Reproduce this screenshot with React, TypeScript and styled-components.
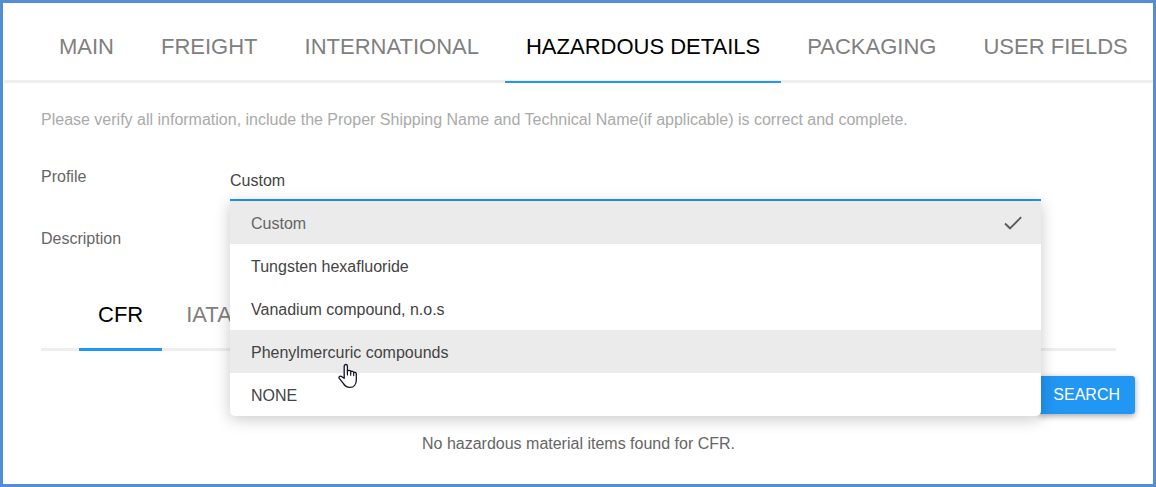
import React, { useState } from 'react';
import styled, { createGlobalStyle } from 'styled-components';

const GlobalStyle = createGlobalStyle`
  *, *::before, *::after { box-sizing: border-box; }
  body {
    margin: 0;
    background: #fff;
    font-family: "Liberation Sans", Arial, sans-serif;
    font-size: 16px;
    line-height: 20px;
    color: #666;
  }
  button, select { font: inherit; }
`;

const Page = styled.main`
  min-height: 100vh;
  border: 3px solid #548dd4;
  overflow: hidden;
`;

const TabBar = styled.nav<{ $nested?: boolean }>`
  display: flex;
  gap: 5px;
  height: 80px;
  margin-top: ${(p) => (p.$nested ? 22 : 0)}px;
  margin-left: ${(p) => (p.$nested ? 0 : 1)}px;
  padding-left: ${(p) => (p.$nested ? 38 : 34)}px;
  box-shadow: inset 0 -3px 0 #eee;
`;

const Tab = styled.button<{ $active?: boolean; $nested?: boolean }>`
  flex: none;
  padding: 10px ${(p) => (p.$nested ? 19 : 21)}px 0;
  border: 0;
  border-bottom: ${(p) => (p.$nested ? 3 : 2)}px solid ${(p) => (p.$active ? '#2196f3' : 'transparent')};
  background: none;
  color: ${(p) => (p.$active ? '#000' : '#808080')};
  font-size: 22px;
  line-height: 28px;
  white-space: nowrap;
  cursor: pointer;
`;

const Content = styled.section`
  padding: 27px 37px 0 38px;
`;

const Note = styled.p`
  margin: 0;
  color: #aaa;
`;

const Form = styled.form`
  display: grid;
  grid-template-columns: 189px 1fr;
  row-gap: 18px;
  margin-top: 27px;
  padding-right: 75px;
`;

const Label = styled.label`
  padding-top: 10px;
`;

const Field = styled.div`
  position: relative;
  height: 44px;
`;

const Select = styled.select`
  appearance: none;
  display: block;
  width: 100%;
  height: 44px;
  padding: 5px 0 0;
  border: 0;
  border-bottom: 2px solid #2196f3;
  border-radius: 0;
  outline: 0;
  background: transparent;
  color: #444;
`;

const Menu = styled.ul`
  position: absolute;
  z-index: 2;
  top: 100%;
  left: 0;
  right: 0;
  margin: 0;
  padding: 0;
  list-style: none;
  background: #fff;
  border-radius: 0 0 5px 5px;
  box-shadow: 0 3px 16px rgba(0, 0, 0, 0.22);
`;

const Option = styled.li<{ $shaded?: boolean; $selected?: boolean }>`
  position: relative;
  display: flex;
  align-items: center;
  justify-content: space-between;
  height: 43px;
  padding: 2px 18px 0 21px;
  background: ${(p) => (p.$shaded ? '#ebebeb' : 'transparent')};
  color: ${(p) => (p.$selected ? '#666' : '#444')};
  cursor: pointer;
`;

const Pointer = styled.svg`
  position: absolute;
  top: 33px;
  left: 108px;
  z-index: 3;
`;

const Description = styled.output`
  padding-top: 10px;
`;

const Actions = styled.div`
  display: flex;
  justify-content: flex-end;
  margin: 25px -19px 0 0;
`;

const SearchButton = styled.button`
  height: 38px;
  padding: 0 15px;
  border: 0;
  border-radius: 3px;
  background: #2196f3;
  color: #fff;
  box-shadow: 0 2px 6px rgba(0, 0, 0, 0.35);
  cursor: pointer;
`;

const Empty = styled.p`
  margin: 20px 0 0;
  text-align: center;
`;

const sections = ['MAIN', 'FREIGHT', 'INTERNATIONAL', 'HAZARDOUS DETAILS', 'PACKAGING', 'USER FIELDS'];
const regulations = ['CFR', 'IATA'];
const profiles = ['Custom', 'Tungsten hexafluoride', 'Vanadium compound, n.o.s', 'Phenylmercuric compounds', 'NONE'];

function CheckMark() {
  return (
    <svg width="20" height="16" viewBox="0 0 20 16" fill="none" aria-hidden="true">
      <path d="M2 7.5 L7 12.3 L18.2 1.2" stroke="#5c5c5c" strokeWidth="1.9" />
    </svg>
  );
}

function HandPointer() {
  return (
    <Pointer width="20" height="26" viewBox="0 0 20 26" aria-hidden="true">
      <path
        d="M6.2 15.3V3.2C6.2 .9 9.4 .9 9.4 3.2V8.2C10 7 12.5 7.2 12.8 8.7C13.6 7.9 15.5 8.1 15.7 9.6C16.5 8.8 18.3 9.2 18.3 11V17.2C18.3 21.5 15.8 24.4 12 24.4C8.8 24.4 6.9 23.2 5.3 20.4L1.3 15.4C.3 13.8 2.1 12.4 3.6 13.6Z"
        fill="#fff"
        stroke="#141428"
        strokeWidth="1.3"
        strokeLinejoin="round"
      />
      <path d="M9.4 7.8V12M12.7 8.6V12.2M15.7 9.6V12.6" stroke="#141428" strokeWidth="1.2" strokeLinecap="round" />
    </Pointer>
  );
}

export default function App() {
  const [section, setSection] = useState('HAZARDOUS DETAILS');
  const [regulation, setRegulation] = useState('CFR');
  const [profile, setProfile] = useState('Custom');
  const [hovered, setHovered] = useState('Phenylmercuric compounds');

  return (
    <>
      <GlobalStyle />
      <Page>
        <TabBar>
          {sections.map((name) => (
            <Tab key={name} type="button" $active={name === section} onClick={() => setSection(name)}>
              {name}
            </Tab>
          ))}
        </TabBar>
        <Content>
          <Note>
            Please verify all information, include the Proper Shipping Name and Technical Name(if applicable) is correct
            and complete.
          </Note>
          <Form>
            <Label htmlFor="profile">Profile</Label>
            <Field>
              <Select id="profile" value={profile} onChange={(e) => setProfile(e.target.value)}>
                {profiles.map((name) => (
                  <option key={name}>{name}</option>
                ))}
              </Select>
              <Menu role="listbox" aria-label="Profile">
                {profiles.map((name) => (
                  <Option
                    key={name}
                    role="option"
                    aria-selected={name === profile}
                    $selected={name === profile}
                    $shaded={name === profile || name === hovered}
                    onMouseEnter={() => setHovered(name)}
                    onClick={() => setProfile(name)}
                  >
                    {name}
                    {name === profile && <CheckMark />}
                    {name === hovered && <HandPointer />}
                  </Option>
                ))}
              </Menu>
            </Field>
            <Label htmlFor="description">Description</Label>
            <Description id="description" />
          </Form>
          <TabBar $nested>
            {regulations.map((name) => (
              <Tab
                key={name}
                type="button"
                $nested
                $active={name === regulation}
                onClick={() => setRegulation(name)}
              >
                {name}
              </Tab>
            ))}
          </TabBar>
          <Actions>
            <SearchButton type="button">SEARCH</SearchButton>
          </Actions>
          <Empty>No hazardous material items found for {regulation}.</Empty>
        </Content>
      </Page>
    </>
  );
}
